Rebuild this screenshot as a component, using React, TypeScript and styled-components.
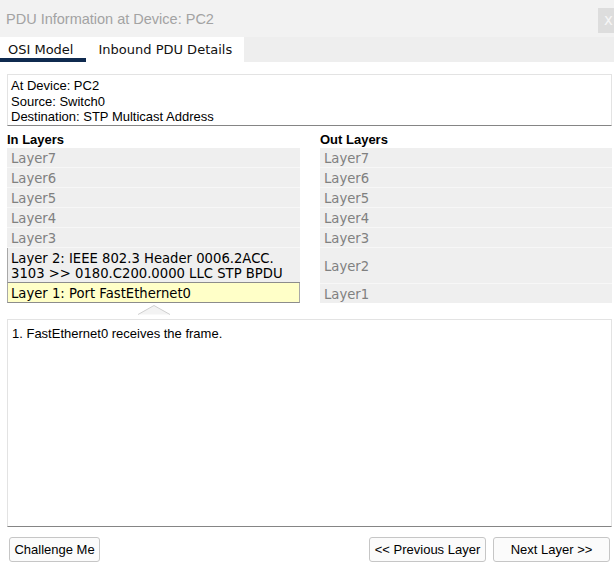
import React from "react";
import styled, { createGlobalStyle } from "styled-components";

const Global = createGlobalStyle`
  html, body { margin: 0; padding: 0; background: #ffffff; }
  body { font-family: "Liberation Sans", Arial, sans-serif; }
  * { box-sizing: border-box; }
`;

const Window = styled.div`
  width: 614px;
  height: 580px;
  background: #ffffff;
  display: flex;
  flex-direction: column;
  overflow: hidden;
`;

const TitleBar = styled.div`
  height: 37px;
  background: #f2f2f2;
  display: flex;
  align-items: center;
  justify-content: space-between;
  padding-left: 6px;
`;

const Title = styled.span`
  font-family: "Liberation Sans", Arial, sans-serif;
  font-size: 14.5px;
  color: #a3a3a3;
  margin-top: 1px;
`;

const CloseButton = styled.div`
  width: 16px;
  height: 25px;
  margin-top: 4px;
  background: #dddddd;
  color: #f6f6f6;
  font-family: "DejaVu Sans", Verdana, sans-serif;
  font-size: 15px;
  display: flex;
  align-items: center;
  padding-left: 6px;
  padding-bottom: 2px;
`;

const TabBar = styled.div`
  height: 25px;
  background: #eeeeee;
  display: flex;
`;

const Tab = styled.div<{ $active?: boolean; $pl: number; $pr: number }>`
  height: 25px;
  background: #ffffff;
  padding: 0 ${(p) => p.$pr}px 0 ${(p) => p.$pl}px;
  display: flex;
  align-items: center;
  padding-bottom: 1px;
  font-family: "DejaVu Sans", Verdana, sans-serif;
  font-size: 13px;
  color: #111111;
  box-shadow: ${(p) => (p.$active ? "inset 0 -4px 0 #0f2a4f" : "none")};
`;

const Content = styled.div`
  padding: 12px 2px 0 7px;
  display: flex;
  flex-direction: column;
`;

const InfoBox = styled.div`
  height: 52px;
  border: 1px solid #e3e3e3;
  border-bottom: 1px solid #858585;
  padding: 3px 0 0 3px;
  font-size: 13px;
  line-height: 15.5px;
  color: #000000;
`;

const Columns = styled.div`
  display: grid;
  grid-template-columns: 293px 292px;
  column-gap: 20px;
  margin-top: 1px;
`;

const Column = styled.div`
  display: flex;
  flex-direction: column;
`;

const Heading = styled.div`
  font-weight: bold;
  font-size: 13px;
  height: 21px;
  padding-top: 5px;
  line-height: 15px;
  color: #000000;
`;

const LayerList = styled.div`
  display: flex;
  flex-direction: column;
  gap: 1px;
  background: #f7f7f7;
`;

const Row = styled.div<{ $h: number; $on?: boolean; $sel?: boolean; $box?: boolean }>`
  min-height: ${(p) => p.$h}px;
  background: ${(p) => (p.$sel ? "#ffffc8" : "#efefef")};
  color: ${(p) => (p.$on ? "#000000" : "#808080")};
  font-family: "DejaVu Sans", Verdana, sans-serif;
  font-size: 13.2px;
  line-height: 15px;
  padding: 1px 4px 0 4px;
  display: flex;
  align-items: center;
  border-bottom: ${(p) => (p.$box ? "1px solid #8c8c8c" : "none")};
  border-left: ${(p) => (p.$box ? "1px solid #a8a8a8" : "none")};
  border-right: ${(p) => (p.$sel ? "1px solid #a8a8a8" : "none")};
  padding-left: ${(p) => (p.$box ? 3 : 4)}px;
`;

const ArrowHolder = styled.div`
  height: 13px;
  display: flex;
  justify-content: center;
  padding-top: 1px;
`;

const DescBox = styled.div`
  margin-top: 3px;
  height: 208px;
  border: 1px solid #e3e3e3;
  border-bottom: 1px solid #858585;
  padding: 6px 0 0 4px;
  font-size: 13px;
  color: #000000;
  line-height: 15px;
`;

const ButtonRow = styled.div`
  display: flex;
  align-items: center;
  margin-top: 10px;
  padding: 0 2px;
  gap: 7px;
`;

const Spacer = styled.div`
  flex: 1;
`;

const Button = styled.button<{ $w: number }>`
  width: ${(p) => p.$w}px;
  height: 25px;
  border: 1px solid #c6c6c6;
  border-radius: 3px;
  background: #fbfbfb;
  font-family: "Liberation Sans", Arial, sans-serif;
  font-size: 13px;
  color: #000000;
  padding: 0;
  display: flex;
  align-items: center;
  justify-content: center;
`;

const inLayers = ["Layer7", "Layer6", "Layer5", "Layer4", "Layer3"];

export default function App() {
  return (
    <Window>
      <Global />
      <TitleBar>
        <Title>PDU Information at Device: PC2</Title>
        <CloseButton>x</CloseButton>
      </TitleBar>
      <TabBar>
        <Tab $active $pl={8} $pr={13}>OSI Model</Tab>
        <Tab $pl={12} $pr={12}>Inbound PDU Details</Tab>
      </TabBar>
      <Content>
        <InfoBox>
          <div>At Device: PC2</div>
          <div>Source: Switch0</div>
          <div>Destination: STP Multicast Address</div>
        </InfoBox>
        <Columns>
          <Column>
            <Heading>In Layers</Heading>
            <LayerList>
              {inLayers.map((l) => (
                <Row key={l} $h={19}>{l}</Row>
              ))}
              <Row $h={35} $on $box>
                Layer 2: IEEE 802.3 Header 0006.2ACC.
                <br />
                3103 &gt;&gt; 0180.C200.0000 LLC STP BPDU
              </Row>
            </LayerList>
            <Row $h={20} $on $sel $box>Layer 1: Port FastEthernet0</Row>
            <ArrowHolder>
              <svg width="34" height="11" viewBox="0 0 34 11">
                <polygon points="1,10.5 17,1.5 33,10.5" fill="#f3f3f3" />
                <polyline points="1,10.5 17,1.5 33,10.5" fill="none" stroke="#cfcfcf" strokeWidth="1" />
              </svg>
            </ArrowHolder>
          </Column>
          <Column>
            <Heading>Out Layers</Heading>
            <LayerList>
              {inLayers.map((l) => (
                <Row key={l} $h={19}>{l}</Row>
              ))}
              <Row $h={35}>Layer2</Row>
              <Row $h={19}>Layer1</Row>
            </LayerList>
          </Column>
        </Columns>
        <DescBox>1. FastEthernet0 receives the frame.</DescBox>
        <ButtonRow>
          <Button $w={91}>Challenge Me</Button>
          <Spacer />
          <Button $w={117}>&lt;&lt; Previous Layer</Button>
          <Button $w={117}>Next Layer &gt;&gt;</Button>
        </ButtonRow>
      </Content>
    </Window>
  );
}
